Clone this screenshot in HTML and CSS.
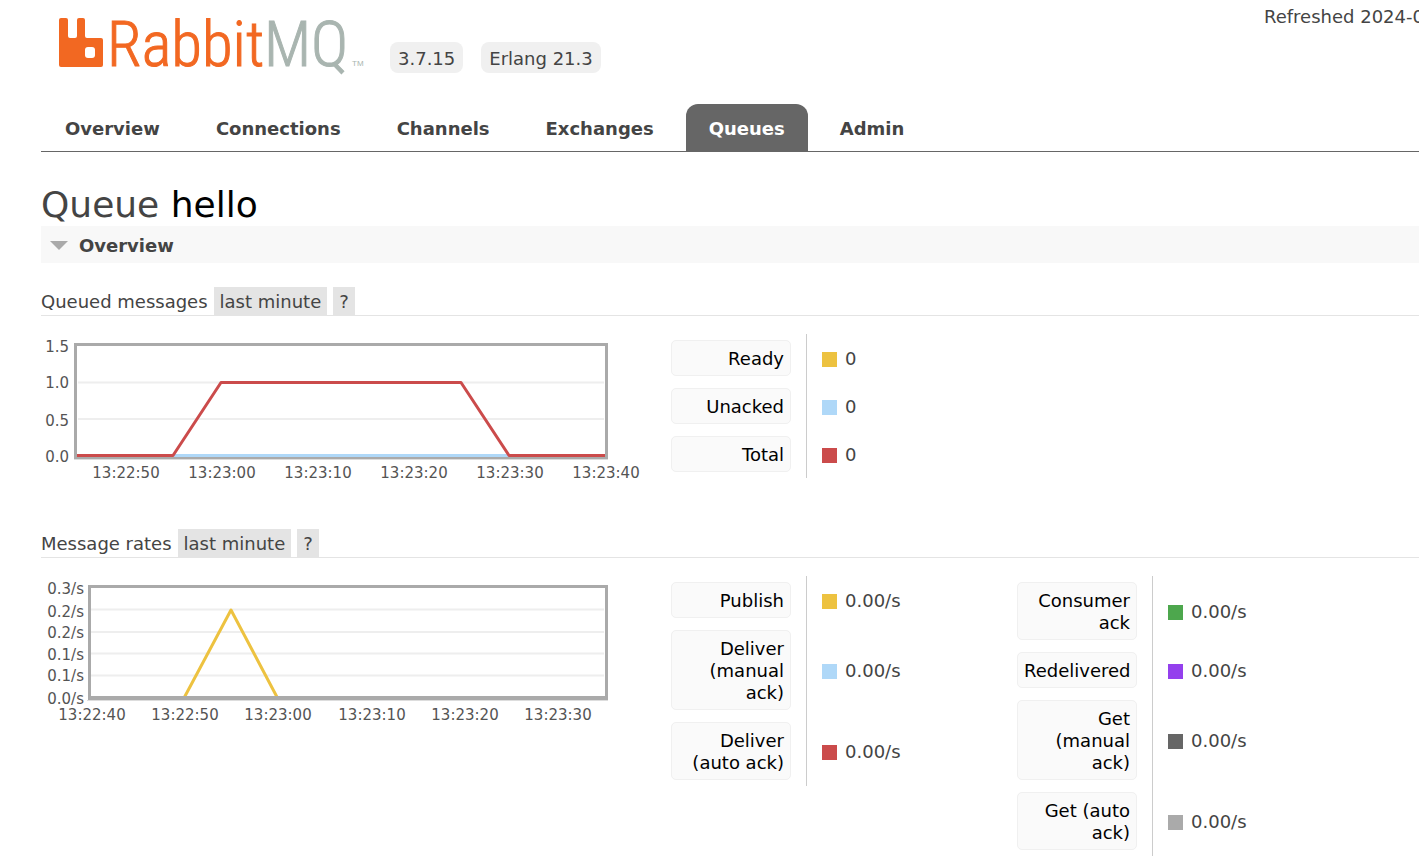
FILE: index.html
```html
<!DOCTYPE html>
<html lang="en">
<head>
<meta charset="utf-8">
<title>RabbitMQ Management</title>
<link rel="stylesheet" href="styles.css">
</head>
<body>
<header class="header">
  <a class="logo" href="#" aria-label="RabbitMQ">
    <svg width="310" height="70" viewBox="0 0 310 70">
      <path fill="#f26822" d="M2 9h5q2 0 2 2v16q0 2 2 2h5q2 0 2-2v-16q0-2 2-2h4q2 0 2 2v16q0 2 2 2h14q2 0 2 2v25q0 2-2 2H2q-2 0-2-2V11q0-2 2-2z"/>
      <rect x="26" y="38" width="10" height="11" rx="3" fill="#fff"/>
      <text class="word orange" x="48" y="57">Rabbit</text>
      <text class="word gray" x="205" y="57">MQ</text>
      <text class="tm" x="293" y="57">TM</text>
    </svg>
  </a>
  <span class="version">3.7.15</span>
  <span class="version">Erlang 21.3</span>
  <span class="refreshed">Refreshed 2024-0</span>
</header>
<nav class="tabs">
  <a href="#">Overview</a>
  <a href="#">Connections</a>
  <a href="#">Channels</a>
  <a href="#">Exchanges</a>
  <a href="#" class="selected">Queues</a>
  <a href="#">Admin</a>
</nav>
<main class="main">
  <h1>Queue <b>hello</b></h1>
  <h2><button type="button" class="section-toggle"><span class="arrow"></span>Overview</button></h2>

  <section class="panel">
    <h3>Queued messages <button type="button">last minute</button> <button type="button">?</button></h3>
    <div class="stats">
      <svg class="chart" width="606" height="160" viewBox="0 0 606 160">
        <g class="grid"><path d="M37 48.500H563M37 85H563"/></g>
        <path class="frame-shadow" d="M33 125.500H567"/>
        <rect class="frame" x="34.500" y="10.500" width="531" height="113"/>
        <path class="line blue" d="M36 121.500H564"/>
        <path class="line red" d="M36 121.500H132L180 48.500H420L468 121.500H564"/>
        <g class="axis y">
          <text x="28" y="18">1.5</text><text x="28" y="54">1.0</text>
          <text x="28" y="92">0.5</text><text x="28" y="128">0.0</text>
        </g>
        <g class="axis x">
          <text x="85" y="144">13:22:50</text><text x="181" y="144">13:23:00</text>
          <text x="277" y="144">13:23:10</text><text x="373" y="144">13:23:20</text>
          <text x="469" y="144">13:23:30</text><text x="565" y="144">13:23:40</text>
        </g>
      </svg>
      <table class="legend">
        <tr><th scope="row"><button type="button">Ready</button></th><td><i class="key yellow"></i>0</td></tr>
        <tr><th scope="row"><button type="button">Unacked</button></th><td><i class="key blue"></i>0</td></tr>
        <tr><th scope="row"><button type="button">Total</button></th><td><i class="key red"></i>0</td></tr>
      </table>
    </div>
  </section>

  <section class="panel">
    <h3>Message rates <button type="button">last minute</button> <button type="button">?</button></h3>
    <div class="stats">
      <svg class="chart" width="606" height="160" viewBox="0 0 606 160">
        <g class="grid"><path d="M50 33.500H563M50 56H563M50 77.500H563M50 99.500H563"/></g>
        <path class="frame-shadow" d="M46 124.500H567"/>
        <path class="line yellow" d="M143 122L190 34L236.500 122"/>
        <rect class="frame" x="48.500" y="10.500" width="517" height="112"/>
        <path class="base" d="M47 122H567"/>
        <g class="axis y">
          <text x="43" y="18">0.3/s</text><text x="43" y="41">0.2/s</text>
          <text x="43" y="62">0.2/s</text><text x="43" y="84">0.1/s</text>
          <text x="43" y="105">0.1/s</text><text x="43" y="128">0.0/s</text>
        </g>
        <g class="axis x">
          <text x="51" y="144">13:22:40</text><text x="144" y="144">13:22:50</text>
          <text x="237" y="144">13:23:00</text><text x="331" y="144">13:23:10</text>
          <text x="424" y="144">13:23:20</text><text x="517" y="144">13:23:30</text>
        </g>
      </svg>
      <table class="legend">
        <tr><th scope="row"><button type="button">Publish</button></th><td><i class="key yellow"></i>0.00/s</td></tr>
        <tr><th scope="row"><button type="button">Deliver (manual ack)</button></th><td><i class="key blue"></i>0.00/s</td></tr>
        <tr><th scope="row"><button type="button">Deliver (auto ack)</button></th><td><i class="key red"></i>0.00/s</td></tr>
      </table>
      <table class="legend">
        <tr><th scope="row"><button type="button">Consumer ack</button></th><td><i class="key green"></i>0.00/s</td></tr>
        <tr><th scope="row"><button type="button">Redelivered</button></th><td><i class="key purple"></i>0.00/s</td></tr>
        <tr><th scope="row"><button type="button">Get (manual ack)</button></th><td><i class="key dark"></i>0.00/s</td></tr>
        <tr><th scope="row"><button type="button">Get (auto ack)</button></th><td><i class="key light"></i>0.00/s</td></tr>
      </table>
    </div>
  </section>
</main>
</body>
</html>
```
FILE: styles.css
```css
* { box-sizing: border-box; }
body {
  margin: 0;
  padding-left: 41px;
  overflow: hidden;
  background: #fff;
  color: #444;
  font: 18px/22px Verdana, "DejaVu Sans", sans-serif;
}
button { font: inherit; color: inherit; border: 0; margin: 0; cursor: pointer; }

.header { display: flex; align-items: flex-start; height: 104px; padding: 9px 0 0 18px; }
.logo { display: block; width: 331px; height: 70px; }
.logo svg { display: block; overflow: visible; }
.word { font: 300 63px "Roboto Condensed", "Liberation Sans Narrow", "Liberation Sans", sans-serif; stroke-width: 1px; }
.orange { fill: #f26822; stroke: #f26822; }
.gray { fill: #a9b5b0; stroke: #a9b5b0; }
.tm { font: 8px "Liberation Sans", sans-serif; fill: #a9b5b0; }
.version { margin: 33px 18px 0 0; padding: 6px 8px 3px; border-radius: 8px; background: #f0f0f0; }
.refreshed { width: 155px; margin: -4px 0 0 auto; padding-top: 1px; white-space: nowrap; }

.tabs { display: flex; gap: 8px; border-bottom: 1px solid #666; }
.tabs a { padding: 14px 24px 11px; color: #444; font-weight: bold; text-decoration: none; border-radius: 12px 12px 0 0; }
.tabs .selected { padding: 14px 23px 11px; background: #666; color: #fff; }

h1 { margin: 31px 0 0; font-size: 36px; line-height: 43px; font-weight: normal; }
h1 b { color: #000; font-weight: normal; }
h2 { margin: 0; font-size: 18px; }
.section-toggle { display: flex; align-items: center; gap: 11px; width: 100%; height: 37px; padding: 2px 9px 0; background: #f8f8f8; font-weight: bold; }
.arrow { border: solid transparent; border-width: 9px 9px 0; border-top-color: #aaa; }

.panel { padding-top: 24px; margin-bottom: 27px; }
h3 { display: flex; gap: 6px; align-items: baseline; margin: 0 0 18px; font-size: 18px; font-weight: normal; border-bottom: 1px solid #e4e4e4; }
h3 button { height: 28px; padding: 1px 6px 0; background: #e4e4e4; }
.stats { display: flex; align-items: flex-start; min-height: 144px; }
.panel:first-of-type .stats { height: 144px; }
.chart { flex: none; display: block; margin-right: 24px; }

.grid { stroke: #eee; stroke-width: 2; }
.frame { fill: none; stroke: #aaa; stroke-width: 3; }
.frame-shadow { stroke: #ddd; stroke-width: 1; }
.base { stroke: #aaa; stroke-width: 4; }
.line { fill: none; stroke-width: 3; stroke-linejoin: round; }
.line.yellow { stroke: #edc240; }
.line.blue { stroke: #afd8f8; }
.line.red { stroke: #cb4b4b; }
.axis { font-size: 15px; fill: #545454; }
.axis.x { text-anchor: middle; }
.axis.y { text-anchor: end; }

.legend { flex: none; width: 346px; border-collapse: separate; border-spacing: 0; table-layout: fixed; }
.legend th { width: 136px; padding: 6px 15px 6px 0; border-right: 1px solid #ccc; font-weight: normal; }
.legend td { padding: 2px 0 0 15px; }
.legend button { display: block; width: 120px; padding: 7px 6px 5px; border: 1px solid #f0f0f0; border-radius: 5px; background: #fafafa; color: #000; text-align: right; }
.key { display: inline-block; width: 15px; height: 15px; margin-right: 8px; vertical-align: -2px; }
.key.yellow { background: #edc240; }
.key.blue { background: #afd8f8; }
.key.red { background: #cb4b4b; }
.key.green { background: #4da74d; }
.key.purple { background: #9440ed; }
.key.dark { background: #666; }
.key.light { background: #aaa; }
```
